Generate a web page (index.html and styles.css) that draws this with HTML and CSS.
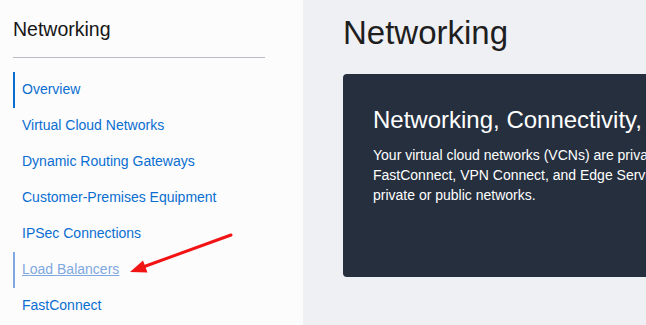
FILE: index.html
```html
<!DOCTYPE html>
<html lang="en">
<head>
  <meta charset="UTF-8">
  <title>Networking</title>
  <link rel="stylesheet" href="styles.css">
</head>
<body>
  <!-- Side navigation -->
  <div class="sidebar">
    <div class="side-title">Networking</div>
    <ul class="nav">
      <li class="nav-item active"><a href="#">Overview</a></li>
      <li class="nav-item"><a href="#">Virtual Cloud Networks</a></li>
      <li class="nav-item"><a href="#">Dynamic Routing Gateways</a></li>
      <li class="nav-item"><a href="#">Customer-Premises Equipment</a></li>
      <li class="nav-item"><a href="#">IPSec Connections</a></li>
      <li class="nav-item hover"><a href="#">Load Balancers</a></li>
      <li class="nav-item"><a href="#">FastConnect</a></li>
    </ul>
  </div>

  <div class="main">
    <h1 class="page-title">Networking</h1>
    <div class="hero">
      <h2 class="hero-title">Networking, Connectivity, and Edge Services</h2>
      <p class="hero-text">
        Your virtual cloud networks (VCNs) are private networks in the cloud. Use<br>
        FastConnect, VPN Connect, and Edge Services to connect your VCNs to<br>
        private or public networks.
      </p>
    </div>
  </div>

  <!-- Red annotation arrow -->
  <svg class="arrow" width="646" height="325" viewBox="0 0 646 325">
    <line x1="231" y1="235" x2="143" y2="267" stroke="#f21414" stroke-width="3" stroke-linecap="round"/>
    <polygon points="130,272 143,260.5 147.5,272.5" fill="#f21414"/>
  </svg>
</body>
</html>
```

FILE: styles.css
```css
* {
  box-sizing: border-box;
}

body {
  margin: 0;
  font-family: "Liberation Sans", Arial, sans-serif;
  display: flex;
  height: 325px;
  overflow: hidden;
  background: #eff0f4;
  position: relative;
}

/* Sidebar */
.sidebar {
  width: 303px;
  flex-shrink: 0;
  background: #fcfcfd;
  padding: 18px 0 0 13px;
}

.side-title {
  font-size: 19.5px;
  line-height: 22px;
  color: #161616;
  width: 252px;
  padding-bottom: 17px;
  border-bottom: 1px solid #b9bcc3;
}

.nav {
  list-style: none;
  margin: 14px 0 0;
  padding: 0;
}

.nav-item {
  height: 36px;
  display: flex;
  align-items: center;
  padding-left: 9px;
  padding-bottom: 2px;
  font-size: 14px;
}

.nav-item a {
  color: #0a6ed0;
  text-decoration: none;
}

.nav-item.active {
  border-left: 2px solid #0a6ed0;
  padding-left: 7px;
}

.nav-item.hover {
  border-left: 2px solid #7ea8df;
  padding-left: 7px;
}

.nav-item.hover a {
  color: #7ea8df;
  text-decoration: underline;
}

/* Main content */
.main {
  flex: 1;
  padding: 14px 0 0 40px;
  overflow: hidden;
}

.page-title {
  margin: 0 0 22px;
  font-size: 33px;
  line-height: 38px;
  font-weight: normal;
  color: #1e1e1e;
}

.hero {
  width: 640px;
  height: 203px;
  background: #252f3e;
  border-radius: 4px;
  padding: 32px 0 0 30px;
  color: #ffffff;
}

.hero-title {
  margin: 0 0 11px;
  font-size: 24px;
  line-height: 28px;
  font-weight: normal;
  white-space: nowrap;
}

.hero-text {
  margin: 0;
  font-size: 14px;
  line-height: 20px;
  white-space: nowrap;
}

/* Annotation overlay */
.arrow {
  position: absolute;
  top: 0;
  left: 0;
  pointer-events: none;
}
```
